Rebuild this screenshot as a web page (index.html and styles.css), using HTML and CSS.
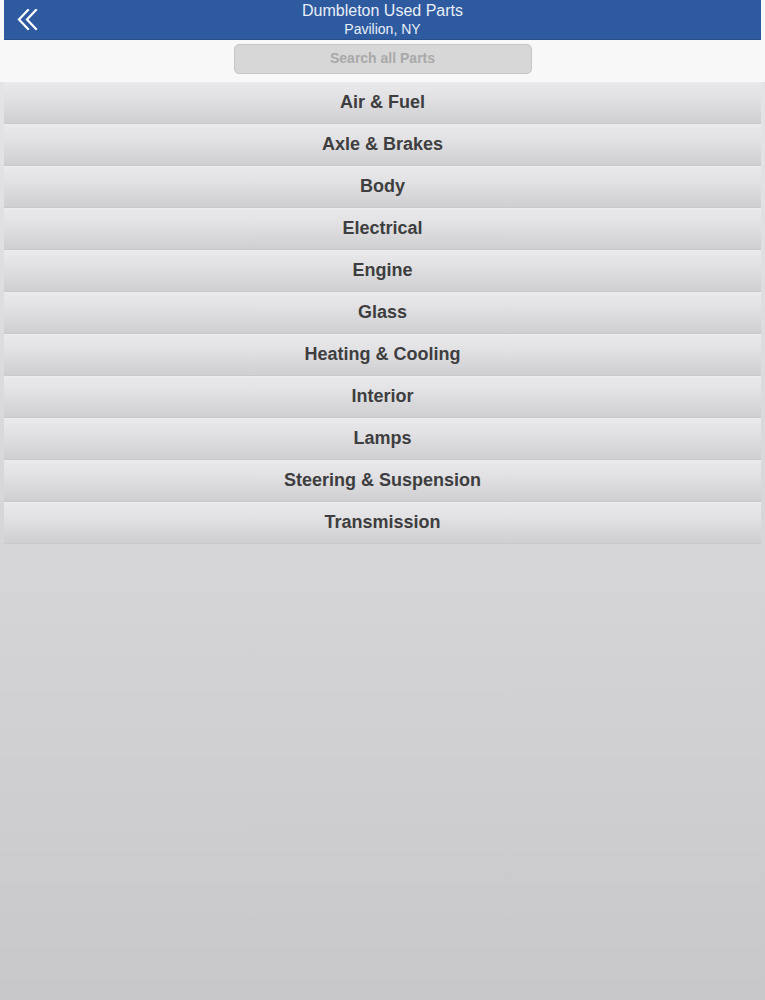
FILE: index.html
```html
<!DOCTYPE html>
<html>
<head>
<meta charset="utf-8">
<link rel="stylesheet" href="styles.css">
</head>
<body>
<div class="top">
  <header class="bar">
    <span class="back">
      <svg width="22" height="22" viewBox="0 0 22 22" fill="none" stroke="#ffffff" stroke-width="2.2" stroke-linecap="square">
        <path d="M11 1 L2 10.5 L11 20"/>
        <path d="M19 1 L10 10.5 L19 20"/>
      </svg>
    </span>
    <div class="titles">
      <div class="title">Dumbleton Used Parts</div>
      <div class="sub">Pavilion, NY</div>
    </div>
  </header>
  <div class="searchwrap">
    <div class="search">Search all Parts</div>
  </div>
</div>
<main class="list">
  <div class="item">Air &amp; Fuel</div>
  <div class="item">Axle &amp; Brakes</div>
  <div class="item">Body</div>
  <div class="item">Electrical</div>
  <div class="item">Engine</div>
  <div class="item">Glass</div>
  <div class="item">Heating &amp; Cooling</div>
  <div class="item">Interior</div>
  <div class="item">Lamps</div>
  <div class="item">Steering &amp; Suspension</div>
  <div class="item">Transmission</div>
</main>
</body>
</html>
```
FILE: styles.css
```css
html, body {
  margin: 0;
  padding: 0;
}
body {
  width: 765px;
  min-height: 1000px;
  font-family: "Liberation Sans", Arial, sans-serif;
  background: linear-gradient(to bottom, #f8f8f9 0, #f8f8f9 82px, #e4e4e6 82px, #c8c7ca 1000px);
}
.top {
  height: 82px;
  background: #f8f8f9;
}
.bar {
  margin: 0 4px;
  height: 40px;
  background: #2e5b9f;
  display: flex;
  align-items: center;
  justify-content: center;
  position: relative;
  border-bottom: 1px solid #2a4f88;
  box-sizing: border-box;
}
.back {
  position: absolute;
  left: 13px;
  top: 9px;
  display: flex;
}
.titles {
  text-align: center;
  color: #e9eef7;
  line-height: 1;
}
.title {
  font-size: 16px;
  margin-top: 0;
}
.sub {
  font-size: 14px;
  margin-top: 3px;
}
.searchwrap {
  display: flex;
  justify-content: center;
  padding-top: 4px;
}
.search {
  width: 298px;
  height: 30px;
  box-sizing: border-box;
  border: 1px solid #c6c6c6;
  border-radius: 5px;
  background: #d7d7d7;
  color: #a9a9a9;
  font-weight: bold;
  font-size: 14px;
  display: flex;
  align-items: center;
  justify-content: center;
  padding-bottom: 2px;
}
.list {
  margin: 0 4px;
  display: flex;
  flex-direction: column;
}
.item {
  height: 42px;
  box-sizing: border-box;
  display: flex;
  align-items: center;
  justify-content: center;
  font-weight: bold;
  font-size: 18px;
  color: #3e3e40;
  background: linear-gradient(to bottom, #e9e9eb 0%, #e2e2e4 35%, #cfced1 100%);
  border-top: 1px solid #ececee;
  border-bottom: 1px solid #c9c8cb;
  padding-bottom: 2px;
}
```
